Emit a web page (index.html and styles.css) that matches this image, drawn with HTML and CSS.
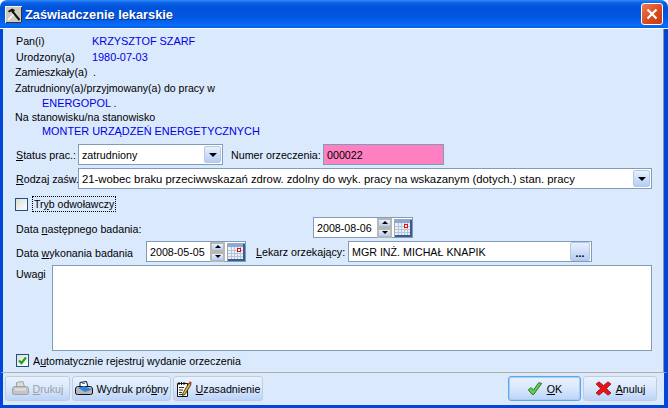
FILE: index.html
```html
<!DOCTYPE html>
<html lang="pl">
<head>
    <meta charset="UTF-8">
    <title>Zaświadczenie lekarskie</title>
    <link rel="stylesheet" href="styles.css">
</head>
<body>
    <div class="window">
        <div class="titlebar">
            <svg class="app-icon" width="17" height="17" viewBox="0 0 17 17">
                <rect x="0.5" y="0.5" width="16" height="16" fill="#cfcbbf" stroke="#f4f4f0"/>
                <path d="M16.5 1 V16.5 H1" fill="none" stroke="#333"/>
                <path d="M3 5 L7 2.5 L10 4 L8.5 6.5 L6 5.5 L4 6.5 Z" fill="#111"/>
                <path d="M7.5 5.5 L14.5 14" stroke="#111" stroke-width="2"/>
                <path d="M3 14 L8.5 8.5" stroke="#fff" stroke-width="1.5"/>
            </svg>
            <h1 class="title">Zaświadczenie lekarskie</h1>
            <div class="close-btn">
                <svg width="12" height="12" viewBox="0 0 12 12"><path d="M1.5 1.5 L10.5 10.5 M10.5 1.5 L1.5 10.5" stroke="#fff" stroke-width="2.2"/></svg>
            </div>
        </div>

        <div class="client">
            <div class="info">
                <div class="info-row row-pan"><span class="info-label">Pan(i)</span><span class="val">KRZYSZTOF SZARF</span></div>
                <div class="info-row row-urodz"><span class="info-label">Urodzony(a)</span><span class="val">1980-07-03</span></div>
                <div class="info-row"><span class="info-label-zam">Zamieszkały(a)</span><span>.</span></div>
                <div class="info-row row-zat">Zatrudniony(a)/przyjmowany(a) do pracy w</div>
                <div class="info-row row-ener val">ENERGOPOL .</div>
                <div class="info-row row-na">Na stanowisku/na stanowisko</div>
                <div class="info-row row-mont val">MONTER URZĄDZEŃ ENERGETYCZNYCH</div>
            </div>

            <div class="form-row status-row">
                <label class="lbl lbl-status"><u>S</u>tatus prac.:</label>
                <div class="field combo combo-status">
                    <span class="field-text">zatrudniony</span>
                    <span class="drop-btn"><i class="arrow"></i></span>
                </div>
                <label class="lbl lbl-numer">Numer orzeczenia:</label>
                <div class="field field-pink"><span class="field-text">000022</span></div>
            </div>

            <div class="form-row rodzaj-row">
                <label class="lbl lbl-status"><u>R</u>odzaj zaśw.</label>
                <div class="field combo combo-rodzaj">
                    <span class="field-text rodzaj-text">21-wobec braku przeciwwskazań zdrow. zdolny do wyk. pracy na wskazanym (dotych.) stan. pracy</span>
                    <span class="drop-btn"><i class="arrow"></i></span>
                </div>
            </div>

            <div class="check-row tryb-row">
                <span class="checkbox"></span>
                <span class="focus-label">Tr<u>y</u>b odwoławczy</span>
            </div>

            <div class="form-row nast-row">
                <label class="lbl lbl-nast">Data <u>n</u>astępnego badania:</label>
                <div class="field date">
                    <span class="field-text">2008-08-06</span>
                    <span class="spin"><b><i class="arrow up"></i></b><b><i class="arrow"></i></b></span>
                    <svg class="cal" width="18" height="18" viewBox="0 0 18 18">
                        <rect x="0.5" y="0.5" width="17" height="17" fill="#eaf0f8" stroke="#9aa8c0"/>
                        <rect x="1" y="1" width="15" height="3" fill="#8fa8d0"/>
                        <rect x="16" y="1" width="2" height="17" fill="#3a5a90"/>
                        <rect x="1" y="16" width="17" height="2" fill="#3a5a90"/>
                        <path d="M1 7.5 H16 M1 10.5 H16 M1 13.5 H16 M4.5 4 V16 M7.5 4 V16 M10.5 4 V16 M13.5 4 V16" stroke="#b8c4d8"/>
                        <rect x="10.5" y="5.5" width="3" height="3" fill="#fff" stroke="#e01010"/>
                    </svg>
                </div>
            </div>

            <div class="form-row wyk-row">
                <label class="lbl lbl-wyk">Data <u>w</u>ykonania badania</label>
                <div class="field date">
                    <span class="field-text">2008-05-05</span>
                    <span class="spin"><b><i class="arrow up"></i></b><b><i class="arrow"></i></b></span>
                    <svg class="cal" width="18" height="18" viewBox="0 0 18 18">
                        <rect x="0.5" y="0.5" width="17" height="17" fill="#eaf0f8" stroke="#9aa8c0"/>
                        <rect x="1" y="1" width="15" height="3" fill="#8fa8d0"/>
                        <rect x="16" y="1" width="2" height="17" fill="#3a5a90"/>
                        <rect x="1" y="16" width="17" height="2" fill="#3a5a90"/>
                        <path d="M1 7.5 H16 M1 10.5 H16 M1 13.5 H16 M4.5 4 V16 M7.5 4 V16 M10.5 4 V16 M13.5 4 V16" stroke="#b8c4d8"/>
                        <rect x="10.5" y="5.5" width="3" height="3" fill="#fff" stroke="#e01010"/>
                    </svg>
                </div>
                <label class="lbl lbl-lekarz"><u>L</u>ekarz orzekający:</label>
                <div class="field field-lekarz">
                    <span class="field-text">MGR INŻ. MICHAŁ KNAPIK</span>
                    <span class="drop-btn dots-btn">...</span>
                </div>
            </div>

            <div class="uwagi-row">
                <label class="lbl lbl-uwagi">Uwagi</label>
                <div class="field memo"></div>
            </div>

            <div class="check-row auto-row">
                <span class="checkbox checked">
                    <svg width="11" height="11" viewBox="0 0 11 11"><path d="M2 5.5 L4.5 8 L9 2.5" fill="none" stroke="#21a121" stroke-width="2.2"/></svg>
                </span>
                <span>A<u>u</u>tomatycznie rejestruj wydanie orzeczenia</span>
            </div>
        </div>

        <div class="footer">
            <button class="btn btn-drukuj" disabled>
                <svg width="17" height="15" viewBox="0 0 17 15">
                    <path d="M4.5 1.5 L11 0.5 L12.5 6 H4.5 Z" fill="#dcdcdc" stroke="#a4a4a4"/>
                    <path d="M2.5 5.5 H14.5 Q16.5 6 16.5 8 V12 Q16.5 13.5 14.5 13.5 H2.5 Q0.5 13.5 0.5 12 V8 Q0.5 6 2.5 5.5 Z" fill="#c4c4c4" stroke="#a0a0a0"/>
                    <path d="M3 8.5 H14" stroke="#e4e4e4" stroke-width="2"/>
                </svg>
                <span><u>D</u>rukuj</span>
            </button>
            <button class="btn btn-wydruk">
                <svg width="18" height="15" viewBox="0 0 18 15">
                    <path d="M5 1.5 L11.5 0.5 L13 6 H5 Z" fill="#fff" stroke="#111"/>
                    <path d="M2.5 5.5 H15.5 Q17.5 6 17.5 8 V12 Q17.5 13.5 15.5 13.5 H2.5 Q0.5 13.5 0.5 12 V8 Q0.5 6 2.5 5.5 Z" fill="#b8b8b8" stroke="#111"/>
                    <path d="M3 7 L9 5 L17 8.5 L10 11 Z" fill="#2f86e0"/>
                    <path d="M7 2.5 H10" stroke="#2f86e0"/>
                </svg>
                <span>Wydruk pró<u>b</u>ny</span>
            </button>
            <button class="btn btn-uzas">
                <svg width="16" height="18" viewBox="0 0 16 18">
                    <path d="M1.5 3.5 H11.5 V16.5 H1.5 Z" fill="#fbfbf2" stroke="#111"/>
                    <path d="M3 2 V5 M5.5 2 V5 M8 2 V5" stroke="#111"/>
                    <path d="M3 7.5 H8 M3 10 H7 M3 12.5 H6 M3 14.5 H7" stroke="#333"/>
                    <path d="M7 13 L13 3 L15 4.5 L9 14.5 L6.5 15.5 Z" fill="#e8b030" stroke="#222" stroke-width="0.8"/>
                    <path d="M13 3 L13.8 1.2 L15.8 2.6 L15 4.5 Z" fill="#d03020"/>
                </svg>
                <span><u>U</u>zasadnienie</span>
            </button>
            <div class="spacer"></div>
            <button class="btn btn-ok">
                <svg width="16" height="15" viewBox="0 0 19 17">
                    <path d="M1.5 10 L5 7.5 L7.5 10.5 L14 1.5 L17.5 2.5 L8 15.5 L6 15.5 Z" fill="#5cd24a" stroke="#2c5a2a"/>
                </svg>
                <span><u>O</u>K</span>
            </button>
            <button class="btn btn-anuluj">
                <svg width="17" height="15" viewBox="0 0 17 15">
                    <path d="M1 3 L4 0.8 L8.5 4.5 L13 0.8 L16 3 L11.5 7.5 L16 12 L13 14.2 L8.5 10.5 L4 14.2 L1 12 L5.5 7.5 Z" fill="#e8121a" stroke="#8a1010" stroke-width="0.7"/>
                </svg>
                <span><u>A</u>nuluj</span>
            </button>
        </div>
    </div>
</body>
</html>
```

FILE: styles.css
```css
html, body {
    margin: 0;
    padding: 0;
    background: #fff;
}
.window {
    width: 668px;
    height: 408px;
    box-sizing: border-box;
    display: flex;
    flex-direction: column;
    background: #dbe9fd;
    border-radius: 7px 7px 0 0;
    overflow: hidden;
    font-family: "Liberation Sans", Arial, sans-serif;
    font-size: 10.7px;
    color: #000;
}

/* title bar */
.titlebar {
    height: 29px;
    flex: none;
    display: flex;
    align-items: center;
    padding: 0 5px;
    background: linear-gradient(#2f8cf5 0, #0a5fe6 3px, #0052d8 8px, #0258e2 18px, #0a6cf8 25px, #0460e6 28px, #fff 28px);
}
.app-icon {
    margin: 0 3px 0 0;
}
.title {
    flex: 1;
    margin: 0;
    font-size: 12.8px;
    font-weight: bold;
    color: #fff;
    text-shadow: 1px 1px 0 #0a2f90;
}
.close-btn {
    width: 20px;
    height: 20px;
    margin-top: -2px;
    border: 1px solid #fff;
    border-radius: 3px;
    display: flex;
    align-items: center;
    justify-content: center;
    background: linear-gradient(135deg, #ec7a52, #d9481c 60%, #c43c12);
}

/* main area */
.client {
    flex: 1;
    border-left: 3px solid #0046d8;
    border-right: 4px solid #0046d8;
    box-shadow: inset -1px 0 0 #8a94a8;
    padding: 5px 12px 0 12px;
}
.info {
    height: 110px;
}
.info-row {
    height: 15px;
    line-height: 15px;
    white-space: nowrap;
}
.info-label {
    display: inline-block;
    width: 76px;
}
.info-label-zam {
    display: inline-block;
    width: 78px;
}
.val {
    color: #0000e6;
    font-size: 10.9px;
}
.row-pan { padding-left: 1px; }
.row-urodz { padding-left: 1px; margin-top: 1px; }
.row-zat { margin-top: 1px; font-size: 10.55px; }
.row-ener, .row-mont { padding-left: 27px; }
.row-na, .row-mont { margin-top: -1px; }

.form-row {
    display: flex;
    align-items: center;
    height: 21px;
}
.lbl {
    white-space: nowrap;
    flex: none;
    box-sizing: border-box;
}
.lbl-status { width: 63px; padding-left: 1px; }
.lbl-numer { margin-left: 8px; width: 92px; }
.lbl-nast { width: 298px; padding: 2px 0 0 1px; }
.lbl-wyk { width: 131px; padding: 2px 0 0 1px; }
.lbl-lekarz { margin-left: 10px; width: 92px; }

.field {
    box-sizing: border-box;
    height: 21px;
    flex: none;
    display: flex;
    align-items: center;
    background: #fff;
    border: 1px solid #7f9db9;
    padding-left: 3px;
    white-space: nowrap;
}
.field-text {
    flex: 1;
    overflow: hidden;
}
.rodzaj-text { font-size: 11.3px; }
.combo-status { width: 145px; }
.field-pink { width: 121px; background: #ff80c0; }
.combo-rodzaj { width: 574px; }
.field-lekarz { width: 244px; }

.drop-btn {
    flex: none;
    width: 17px;
    height: 17px;
    margin-right: 1px;
    display: flex;
    align-items: center;
    justify-content: center;
    box-sizing: border-box;
    border: 1px solid #bac6dc;
    border-radius: 2px;
    background: linear-gradient(#e8f0fe, #b4cdf6);
}
.dots-btn {
    width: 20px;
    height: 19px;
    font-weight: bold;
    align-items: flex-end;
    line-height: 14px;
}
.arrow {
    display: block;
    width: 0;
    height: 0;
    border: 4px solid transparent;
    border-top: 4px solid #000;
    border-bottom: 0;
}
.spin {
    flex: none;
    width: 15px;
    display: flex;
    flex-direction: column;
    margin-right: 2px;
}
.spin b {
    height: 10px;
    box-sizing: border-box;
    display: flex;
    align-items: center;
    justify-content: center;
    border: 2px solid #b8b8b0;
    background: linear-gradient(#e8f0fe, #b4cdf6);
}
.spin .arrow {
    border-width: 3px 3px 0;
    border-top-color: #000;
}
.spin .arrow.up {
    border-width: 0 3px 3px;
    border-bottom: 3px solid #000;
}
.cal {
    flex: none;
}
.date {
    width: 100px;
}

.rodzaj-row { margin-top: 3px; }
.tryb-row { margin-top: 7px; height: 16px; }
.nast-row { margin-top: 5px; }
.wyk-row { margin-top: 3px; }

.check-row {
    display: flex;
    align-items: center;
}
.checkbox {
    box-sizing: border-box;
    width: 13px;
    height: 13px;
    flex: none;
    display: flex;
    align-items: center;
    justify-content: center;
    border: 1px solid #1c5180;
    background: linear-gradient(135deg, #dcdcd7, #fff);
}
.focus-label {
    margin-left: 4px;
    padding: 1px;
    border: 1px dotted #000;
    line-height: 12px;
    font-size: 10.5px;
}
.auto-row {
    margin-top: 3px;
    padding-left: 1px;
    gap: 4px;
}

.uwagi-row {
    display: flex;
    align-items: flex-start;
    margin-top: 3px;
}
.lbl-uwagi {
    width: 37px;
    padding: 3px 0 0 1px;
}
.memo {
    width: 600px;
    height: 86px;
}

/* bottom buttons */
.footer {
    flex: none;
    height: 36px;
    box-sizing: border-box;
    display: flex;
    align-items: flex-start;
    gap: 2px;
    padding: 3px 7px 0 2px;
    background: #dbe9fd;
    border-top: 1px solid #b0b0a8;
    border-bottom: 3px solid #0046d8;
    border-left: 3px solid #0046d8;
    border-right: 4px solid #0046d8;
}
.spacer {
    flex: 1;
}
.btn {
    height: 25px;
    box-sizing: border-box;
    flex: none;
    display: flex;
    align-items: center;
    justify-content: center;
    gap: 4px;
    padding: 0;
    font: inherit;
    color: #000;
    white-space: nowrap;
    border: 1px solid #c4ccd8;
    border-radius: 3px;
    background: linear-gradient(#e8f1fe 0, #dbe9fd 45%, #bcd4f8 100%);
}
.btn svg {
    flex: none;
}
.btn-drukuj { width: 65px; color: #a0a0a0; }
.btn-wydruk { width: 99px; }
.btn-uzas { width: 90px; }
.btn-ok { width: 73px; border-color: #5fa6ea; box-shadow: inset 0 0 0 1px #a6cdf4; }
.btn-anuluj { width: 74px; }
```
